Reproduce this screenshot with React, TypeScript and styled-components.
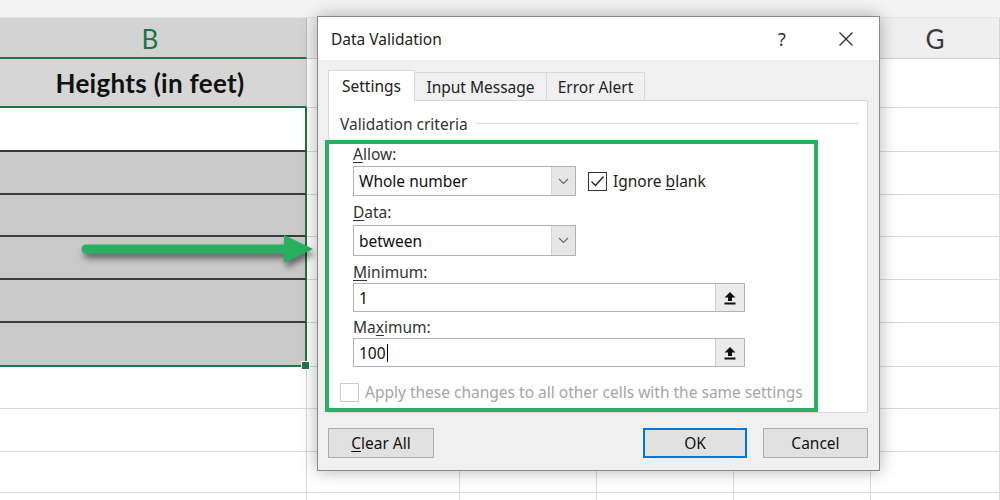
import styled, { createGlobalStyle } from "styled-components";

const GlobalStyle = createGlobalStyle`
  html, body {
    margin: 0;
    padding: 0;
    width: 1000px;
    height: 500px;
    overflow: hidden;
    background: #ffffff;
  }
`;

const Page = styled.div`
  position: relative;
  width: 1000px;
  height: 500px;
  overflow: hidden;
  background: #ffffff;
`;

/* ---------- spreadsheet ---------- */

const Sheet = styled.div`
  display: flex;
  flex-direction: column;
  margin-left: -6px;
  font-family: "Lato", "Open Sans", sans-serif;
`;

const TopStrip = styled.div`
  height: 18px;
  box-sizing: border-box;
  background: #f4f4f4;
  border-bottom: 1px solid #e3e3e3;
`;

const Row = styled.div<{ $h: number }>`
  display: flex;
  height: ${(p) => p.$h}px;
`;

const Cell = styled.div<{
  $w: number;
  $bg: string;
  $line: string;
  $lineW: number;
  $edge: string;
  $edgeW: number;
}>`
  position: relative;
  box-sizing: border-box;
  width: ${(p) => p.$w}px;
  flex: 0 0 ${(p) => p.$w}px;
  background: ${(p) => p.$bg};
  border-bottom: ${(p) => p.$lineW}px solid ${(p) => p.$line};
  border-right: ${(p) => p.$edgeW}px solid ${(p) => p.$edge};
  display: flex;
  align-items: center;
  justify-content: center;
`;

const ColLetter = styled.span<{ $sel?: boolean }>`
  font-size: 26px;
  color: ${(p) => (p.$sel ? "#217346" : "#3b3b3b")};
  padding-top: 2px;
`;

const HeadText = styled.span`
  font-size: 26px;
  font-weight: 700;
  letter-spacing: 0.3px;
  color: #111;
`;

const FillHandle = styled.div`
  position: absolute;
  right: -5px;
  bottom: -5px;
  width: 7px;
  height: 7px;
  background: #217346;
  border: 1px solid #fff;
  z-index: 2;
`;

const ArrowLayer = styled.svg`
  position: absolute;
  left: 0;
  top: 0;
  pointer-events: none;
  filter: drop-shadow(2px 5px 3px rgba(0, 0, 0, 0.5));
`;

/* ---------- dialog ---------- */

const Dialog = styled.div`
  position: absolute;
  left: 317px;
  top: 16px;
  width: 563px;
  height: 455px;
  box-sizing: border-box;
  border: 1px solid #8a8a8a;
  background: #f0f0f0;
  box-shadow: 0 0 16px rgba(0, 0, 0, 0.3);
  display: flex;
  flex-direction: column;
  font-family: "Noto Sans", "Open Sans", sans-serif;
  font-size: 15.5px;
  color: #1a1a1a;
`;

const TitleBar = styled.div`
  height: 43px;
  flex: 0 0 43px;
  background: #ffffff;
  display: flex;
  align-items: center;
  padding: 0 11px 0 13px;
`;

const Title = styled.div`
  flex: 1;
  color: #222;
`;

const TitleButton = styled.div<{ $w: number }>`
  width: ${(p) => p.$w}px;
  height: 30px;
  display: flex;
  align-items: center;
  justify-content: center;
  font-size: 18px;
  color: #333;
`;

const Body = styled.div`
  flex: 1;
  display: flex;
  flex-direction: column;
  padding: 10px 11px 11px 10px;
`;

const Tabs = styled.div`
  display: flex;
  align-items: flex-end;
  height: 31px;
  margin-bottom: -1px;
  position: relative;
  z-index: 1;
`;

const Tab = styled.div<{ $w: number; $active?: boolean }>`
  box-sizing: border-box;
  width: ${(p) => p.$w}px;
  height: ${(p) => (p.$active ? 31 : 28)}px;
  margin-bottom: ${(p) => (p.$active ? 0 : 1)}px;
  background: ${(p) => (p.$active ? "#ffffff" : "#f0f0f0")};
  border: 1px solid #d9d9d9;
  border-bottom: none;
  border-left: ${(p) => (p.$active ? "1px solid #d9d9d9" : "none")};
  display: flex;
  align-items: center;
  justify-content: center;
  color: #222;
`;

const Panel = styled.div`
  box-sizing: border-box;
  height: 313px;
  width: 540px;
  background: #ffffff;
  border: 1px solid #d9d9d9;
  padding-top: 13px;
  display: flex;
  flex-direction: column;
`;

const GroupHeader = styled.div`
  height: 20px;
  display: flex;
  align-items: center;
  gap: 8px;
  padding-left: 11px;
  margin-right: 8px;
  color: #333;
`;

const GroupRule = styled.div`
  flex: 1;
  border-top: 1px solid #dcdcdc;
  margin-top: -2px;
`;

const Highlight = styled.div`
  box-sizing: border-box;
  margin: 6px 0 0 -4px;
  width: 493px;
  height: 273px;
  border: 4px solid #29b062;
  padding-left: 24px;
  display: flex;
  flex-direction: column;
`;

const Label = styled.div<{ $mt: number }>`
  height: 20px;
  line-height: 20px;
  margin-top: ${(p) => p.$mt}px;
  color: #333;
`;

const U = styled.span`
  text-decoration: underline;
  text-underline-offset: 2px;
`;

const FieldRow = styled.div<{ $mt: number }>`
  display: flex;
  align-items: center;
  gap: 12px;
  margin-top: ${(p) => p.$mt}px;
`;

const Combo = styled.div<{ $h: number }>`
  box-sizing: border-box;
  width: 223px;
  height: ${(p) => p.$h}px;
  border: 1px solid #b2b2b2;
  background: #fff;
  display: flex;
  align-items: stretch;
`;

const ComboText = styled.div`
  flex: 1;
  display: flex;
  align-items: center;
  padding-left: 5px;
  color: #111;
`;

const ComboButton = styled.div`
  width: 23px;
  background: #e6e6e6;
  border-left: 1px solid #d4d4d4;
  display: flex;
  align-items: center;
  justify-content: center;
`;

const RefInput = styled.div<{ $mt: number }>`
  box-sizing: border-box;
  width: 392px;
  height: 29px;
  margin-top: ${(p) => p.$mt}px;
  border: 1px solid #b2b2b2;
  background: #fff;
  display: flex;
  align-items: stretch;
`;

const RefText = styled.div`
  flex: 1;
  display: flex;
  align-items: center;
  padding-left: 5px;
  color: #111;
`;

const Caret = styled.span`
  display: inline-block;
  width: 1px;
  height: 18px;
  background: #000;
  margin-left: 1px;
`;

const RefButton = styled.div`
  width: 28px;
  background: #ebebeb;
  border-left: 1px solid #cfcfcf;
  display: flex;
  align-items: center;
  justify-content: center;
`;

const CheckLine = styled.div<{ $muted?: boolean }>`
  display: flex;
  align-items: center;
  gap: 6px;
  color: ${(p) => (p.$muted ? "#a6a6a6" : "#222")};
`;

const Box = styled.div<{ $muted?: boolean }>`
  box-sizing: border-box;
  width: 19px;
  height: 19px;
  border: 1px solid ${(p) => (p.$muted ? "#cdcdcd" : "#333")};
  background: #fff;
  display: flex;
  align-items: center;
  justify-content: center;
`;

const ApplyRow = styled.div`
  margin: 14px 0 0 -13px;
`;

const Footer = styled.div`
  display: flex;
  align-items: center;
  margin-top: 15px;
  gap: 16px;
`;

const Spacer = styled.div`
  flex: 1;
`;

const Button = styled.div<{ $w: number; $default?: boolean }>`
  box-sizing: border-box;
  width: ${(p) => p.$w}px;
  height: 30px;
  background: #e1e1e1;
  border: ${(p) => (p.$default ? "2px solid #0078d7" : "1px solid #adadad")};
  display: flex;
  align-items: center;
  justify-content: center;
  color: #111;
`;

/* ---------- data ---------- */

const colWidths = [313, 153, 137, 137, 137, 129];

type BCell = {
  bg: string;
  line: string;
  lineW: number;
  edge: string;
  edgeW: number;
  content?: "letter" | "head";
  handle?: boolean;
};

const green = "#217346";
const dark = "#3c3c3c";
const grid = "#dadada";

const rows: { h: number; b: BCell; header?: boolean }[] = [
  { h: 41, header: true, b: { bg: "#d3d3d3", line: green, lineW: 2, edge: "#bdbdbd", edgeW: 1, content: "letter" } },
  { h: 49, b: { bg: "#d6d6d6", line: green, lineW: 2, edge: "#c4c4c4", edgeW: 1, content: "head" } },
  { h: 44, b: { bg: "#ffffff", line: dark, lineW: 2, edge: green, edgeW: 2 } },
  { h: 43, b: { bg: "#c9c9c9", line: dark, lineW: 2, edge: green, edgeW: 2 } },
  { h: 42, b: { bg: "#c9c9c9", line: dark, lineW: 2, edge: green, edgeW: 2 } },
  { h: 43, b: { bg: "#c9c9c9", line: dark, lineW: 2, edge: green, edgeW: 2 } },
  { h: 43, b: { bg: "#c9c9c9", line: dark, lineW: 2, edge: green, edgeW: 2 } },
  { h: 44, b: { bg: "#c9c9c9", line: green, lineW: 2, edge: green, edgeW: 2, handle: true } },
  { h: 42, b: { bg: "#ffffff", line: grid, lineW: 1, edge: grid, edgeW: 1 } },
  { h: 43, b: { bg: "#ffffff", line: grid, lineW: 1, edge: grid, edgeW: 1 } },
  { h: 41, b: { bg: "#ffffff", line: grid, lineW: 1, edge: grid, edgeW: 1 } },
  { h: 30, b: { bg: "#ffffff", line: grid, lineW: 1, edge: grid, edgeW: 1 } },
];

const Chevron = () => (
  <svg width="11" height="7" viewBox="0 0 11 7">
    <polyline points="1,1 5.5,5.5 10,1" fill="none" stroke="#6a6a6a" strokeWidth="1.2" />
  </svg>
);

const RefIcon = () => (
  <svg width="12" height="14" viewBox="0 0 12 14">
    <polygon points="6,1 11.5,6.5 8,6.5 8,10 4,10 4,6.5 0.5,6.5" fill="#111" />
    <rect x="0.5" y="11.5" width="11" height="2" fill="#111" />
  </svg>
);

export default function App() {
  return (
    <Page>
      <GlobalStyle />
      <Sheet>
        <TopStrip />
        {rows.map((r, i) => (
          <Row key={i} $h={r.h}>
            {colWidths.map((w, c) => {
              if (c === 0) {
                return (
                  <Cell
                    key={c}
                    $w={w}
                    $bg={r.b.bg}
                    $line={r.b.line}
                    $lineW={r.b.lineW}
                    $edge={r.b.edge}
                    $edgeW={r.b.edgeW}
                  >
                    {r.b.content === "letter" && <ColLetter $sel>B</ColLetter>}
                    {r.b.content === "head" && <HeadText>Heights (in feet)</HeadText>}
                    {r.b.handle && <FillHandle />}
                  </Cell>
                );
              }
              return (
                <Cell
                  key={c}
                  $w={w}
                  $bg={r.header ? "#efefef" : "#ffffff"}
                  $line={r.header ? "#cfcfcf" : grid}
                  $lineW={1}
                  $edge={r.header ? "#d4d4d4" : grid}
                  $edgeW={1}
                >
                  {r.header && c === 5 && <ColLetter>G</ColLetter>}
                </Cell>
              );
            })}
          </Row>
        ))}
      </Sheet>

      <ArrowLayer width="330" height="300">
        <line x1="86" y1="249" x2="290" y2="249" stroke="#27b060" strokeWidth="9" strokeLinecap="round" />
        <polygon points="284,235 313,249 284,263" fill="#27b060" />
      </ArrowLayer>

      <Dialog>
        <TitleBar>
          <Title>Data Validation</Title>
          <TitleButton $w={40}>?</TitleButton>
          <TitleButton $w={22} />
          <TitleButton $w={44}>
            <svg width="16" height="16" viewBox="0 0 16 16">
              <path d="M1.5 1.5 L14.5 14.5 M14.5 1.5 L1.5 14.5" stroke="#333" strokeWidth="1.4" />
            </svg>
          </TitleButton>
        </TitleBar>
        <Body>
          <Tabs>
            <Tab $w={87} $active>Settings</Tab>
            <Tab $w={132}>Input Message</Tab>
            <Tab $w={98}>Error Alert</Tab>
          </Tabs>
          <Panel>
            <GroupHeader>
              Validation criteria
              <GroupRule />
            </GroupHeader>
            <Highlight>
              <Label $mt={0}>
                <U>A</U>llow:
              </Label>
              <FieldRow $mt={2}>
                <Combo $h={30}>
                  <ComboText>Whole number</ComboText>
                  <ComboButton>
                    <Chevron />
                  </ComboButton>
                </Combo>
                <CheckLine>
                  <Box>
                    <svg width="15" height="13" viewBox="0 0 15 13">
                      <polyline points="1.5,6.5 5.5,10.5 13.5,1.5" fill="none" stroke="#222" strokeWidth="1.4" />
                    </svg>
                  </Box>
                  <span>
                    Ignore <U>b</U>lank
                  </span>
                </CheckLine>
              </FieldRow>
              <Label $mt={6}>
                <U>D</U>ata:
              </Label>
              <FieldRow $mt={3}>
                <Combo $h={31}>
                  <ComboText>between</ComboText>
                  <ComboButton>
                    <Chevron />
                  </ComboButton>
                </Combo>
              </FieldRow>
              <Label $mt={6}>
                <U>M</U>inimum:
              </Label>
              <RefInput $mt={1}>
                <RefText>1</RefText>
                <RefButton>
                  <RefIcon />
                </RefButton>
              </RefInput>
              <Label $mt={5}>
                Ma<U>x</U>imum:
              </Label>
              <RefInput $mt={1}>
                <RefText>
                  100
                  <Caret />
                </RefText>
                <RefButton>
                  <RefIcon />
                </RefButton>
              </RefInput>
              <ApplyRow>
                <CheckLine $muted>
                  <Box $muted />
                  <span>Apply these changes to all other cells with the same settings</span>
                </CheckLine>
              </ApplyRow>
            </Highlight>
          </Panel>
          <Footer>
            <Button $w={106}>
              <span>
                <U>C</U>lear All
              </span>
            </Button>
            <Spacer />
            <Button $w={104} $default>
              OK
            </Button>
            <Button $w={105}>Cancel</Button>
          </Footer>
        </Body>
      </Dialog>
    </Page>
  );
}
